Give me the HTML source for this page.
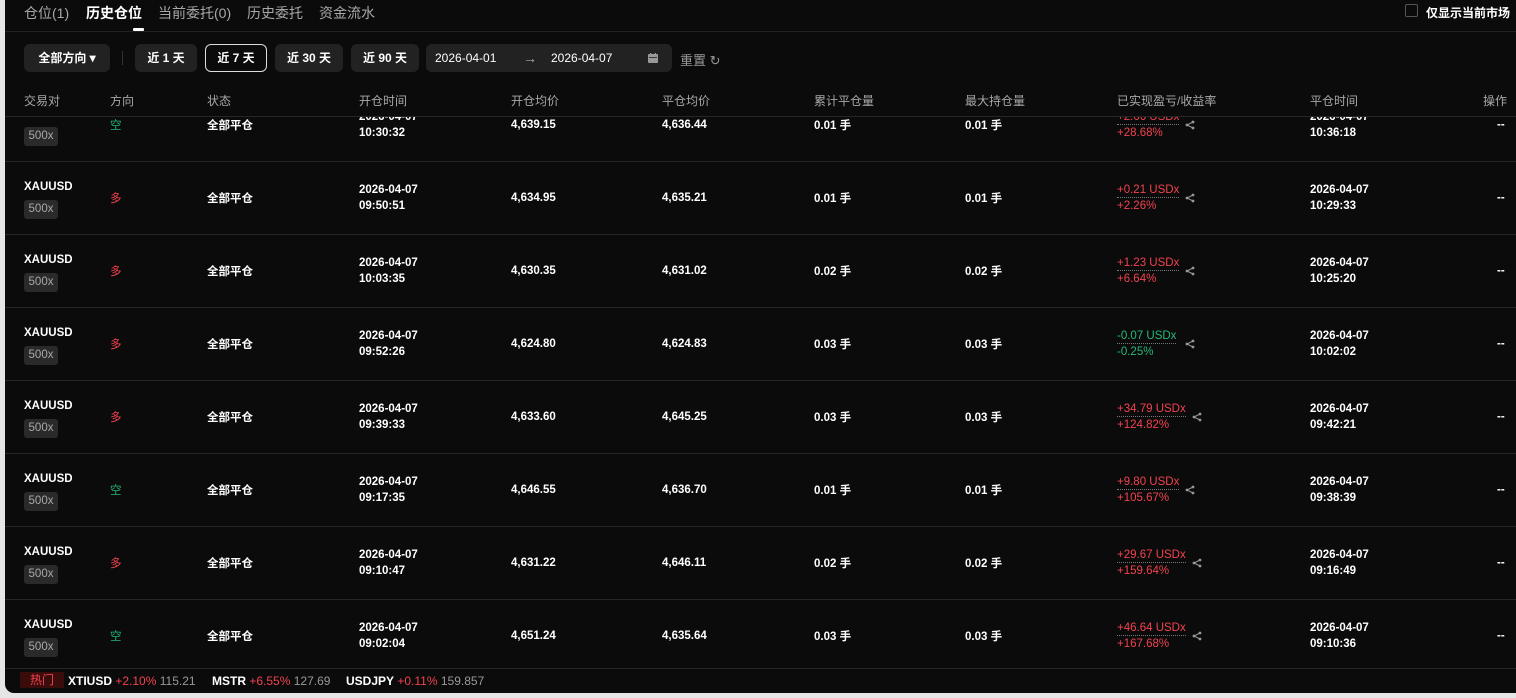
<!DOCTYPE html>
<html><head><meta charset="utf-8"><style>
*{margin:0;padding:0;box-sizing:border-box}
body{width:1516px;height:698px;background:#e6e6e6;overflow:hidden;font-family:"Liberation Sans","Noto Sans CJK SC",sans-serif;color:#fff;position:relative}
.panel{position:absolute;left:5px;top:0;width:1511px;height:693px;background:#0b0b0b;border-radius:0 0 0 9px;overflow:hidden}
.a{position:absolute;white-space:nowrap}
.tab{font-size:14px;color:#a8a8a8;top:3px}
.btn{position:absolute;top:44px;height:28px;background:#222;border-radius:6px;font-size:12px;font-weight:bold;line-height:28px;text-align:center;color:#fff}
.hd{font-size:12px;color:#a8a8a8;top:92px}
.row{position:absolute;left:0;width:1511px;height:73px;border-bottom:1px solid #262626}
.row .a{font-size:11.5px;font-weight:bold}
.badge{position:absolute;left:19px;top:38px;width:34px;height:19px;background:#2a2a2a;border-radius:3px;color:#a8a8a8;font-size:11.5px;line-height:19px;text-align:center}
.red{color:#f2434f}.grn{color:#26b87a}
.pnl{font-weight:normal!important}
</style></head><body>
<div class="panel">
<div class="a tab" style="left:19px">仓位(1)</div>
<div class="a tab" style="left:81px;color:#fff;font-weight:bold">历史仓位</div>
<div style="position:absolute;left:128px;top:28px;width:11px;height:3px;background:#fff;border-radius:1px"></div>
<div class="a tab" style="left:153px">当前委托(0)</div>
<div class="a tab" style="left:242px">历史委托</div>
<div class="a tab" style="left:314px">资金流水</div>
<div style="position:absolute;left:1400px;top:4px;width:13px;height:13px;border:1px solid #555;border-radius:2px"></div>
<div class="a" style="left:1421px;top:4px;font-size:12px;font-weight:bold">仅显示当前市场</div>
<div style="position:absolute;left:0;top:31px;width:1511px;height:1px;background:#222"></div>

<div class="btn" style="left:19px;width:86px">全部方向 ▾</div>
<div style="position:absolute;left:117px;top:51px;width:1px;height:14px;background:#333"></div>
<div class="btn" style="left:130px;width:62px">近 1 天</div>
<div class="btn" style="left:200px;width:62px;background:#0b0b0b;border:1px solid #ddd;line-height:26px">近 7 天</div>
<div class="btn" style="left:270px;width:68px">近 30 天</div>
<div class="btn" style="left:346px;width:68px">近 90 天</div>
<div class="btn" style="left:421px;width:246px;font-weight:normal;text-align:left">
<span style="position:absolute;left:9px">2026-04-01</span><span style="position:absolute;left:97px;color:#aaa;font-size:14px">→</span><span style="position:absolute;left:125px">2026-04-07</span>
<svg style="position:absolute;left:222px;top:9px" width="10" height="10" viewBox="0 0 10 10"><rect x="0" y="1" width="10" height="9" rx="1" fill="#999"/><rect x="1" y="4" width="8" height="0.8" fill="#222"/><rect x="2" y="0" width="1.2" height="2.5" fill="#999"/><rect x="6.8" y="0" width="1.2" height="2.5" fill="#999"/></svg></div>
<div class="a" style="left:675px;top:50px;font-size:13px;color:#999">重置 ↻</div>

<div class="a hd" style="left:19px">交易对</div>
<div class="a hd" style="left:105px">方向</div>
<div class="a hd" style="left:202px">状态</div>
<div class="a hd" style="left:354px">开仓时间</div>
<div class="a hd" style="left:506px">开仓均价</div>
<div class="a hd" style="left:657px">平仓均价</div>
<div class="a hd" style="left:809px">累计平仓量</div>
<div class="a hd" style="left:960px">最大持仓量</div>
<div class="a hd" style="left:1112px">已实现盈亏/收益率</div>
<div class="a hd" style="left:1305px">平仓时间</div>
<div class="a hd" style="left:1478px">操作</div>

<div style="position:absolute;left:0;top:116px;width:1511px;height:552px;overflow:hidden;border-top:1px solid #262626">
<div id="rows" style="position:absolute;left:0;top:-28px"></div>
</div>
<div style="position:absolute;left:0;top:668px;width:1511px;height:1px;background:#262626"></div>
<div class="a" style="left:15px;top:672px;width:44px;height:16px;background:#3a0c0c;color:#f2434f;font-size:12px;text-align:center;line-height:16px">热门</div>
<div class="a" style="left:63px;top:674px;font-size:12px"><b>XTIUSD</b> <span class="red">+2.10%</span> <span style="color:#999">115.21</span></div>
<div class="a" style="left:207px;top:674px;font-size:12px"><b>MSTR</b> <span class="red">+6.55%</span> <span style="color:#999">127.69</span></div>
<div class="a" style="left:341px;top:674px;font-size:12px"><b>USDJPY</b> <span class="red">+0.11%</span> <span style="color:#999">159.857</span></div>
</div>
<script>
var d=[["空","10:30:32","4,639.15","4,636.44","0.01","+2.66","+28.68%","10:36:18"],
["多","09:50:51","4,634.95","4,635.21","0.01","+0.21","+2.26%","10:29:33"],
["多","10:03:35","4,630.35","4,631.02","0.02","+1.23","+6.64%","10:25:20"],
["多","09:52:26","4,624.80","4,624.83","0.03","-0.07","-0.25%","10:02:02"],
["多","09:39:33","4,633.60","4,645.25","0.03","+34.79","+124.82%","09:42:21"],
["空","09:17:35","4,646.55","4,636.70","0.01","+9.80","+105.67%","09:38:39"],
["多","09:10:47","4,631.22","4,646.11","0.02","+29.67","+159.64%","09:16:49"],
["空","09:02:04","4,651.24","4,635.64","0.03","+46.64","+167.68%","09:10:36"]];
var h="";d.forEach(function(r,i){var t=i*73;var dc=r[0]=="空"?"grn":"red";var pc=r[5][0]=="-"?"grn":"red";
var sx=r[5].length>5?1187:1180;
h+='<div class="row" style="top:'+t+'px">'+
'<div class="a" style="left:19px;top:19px">XAUUSD</div><div class="badge">500x</div>'+
'<div class="a '+dc+'" style="left:105px;top:28px;font-weight:normal!important">'+r[0]+'</div>'+
'<div class="a" style="left:202px;top:28px">全部平仓</div>'+
'<div class="a" style="left:354px;top:20px;line-height:16px">2026-04-07<br>'+r[1]+'</div>'+
'<div class="a" style="left:506px;top:30px">'+r[2]+'</div>'+
'<div class="a" style="left:657px;top:30px">'+r[3]+'</div>'+
'<div class="a" style="left:809px;top:28px">'+r[4]+' 手</div>'+
'<div class="a" style="left:960px;top:28px">'+r[4]+' 手</div>'+
'<div class="a pnl '+pc+'" style="left:1112px;top:20px;line-height:16px"><span style="border-bottom:1px dotted #777;padding-bottom:1px">'+r[5]+' USDx</span><br>'+r[6]+'</div>'+
'<div class="a" style="left:'+sx+'px;top:31px"><svg width="10" height="10" viewBox="0 0 10 10"><circle cx="8" cy="2" r="1.4" fill="#999"/><circle cx="2" cy="5" r="1.4" fill="#999"/><circle cx="8" cy="8" r="1.4" fill="#999"/><path d="M8 2L2 5L8 8" stroke="#999" fill="none"/></svg></div>'+
'<div class="a" style="left:1305px;top:20px;line-height:16px">2026-04-07<br>'+r[7]+'</div>'+
'<div class="a" style="left:1492px;top:30px">--</div></div>';});
document.getElementById("rows").innerHTML=h;
</script>
</body></html>
